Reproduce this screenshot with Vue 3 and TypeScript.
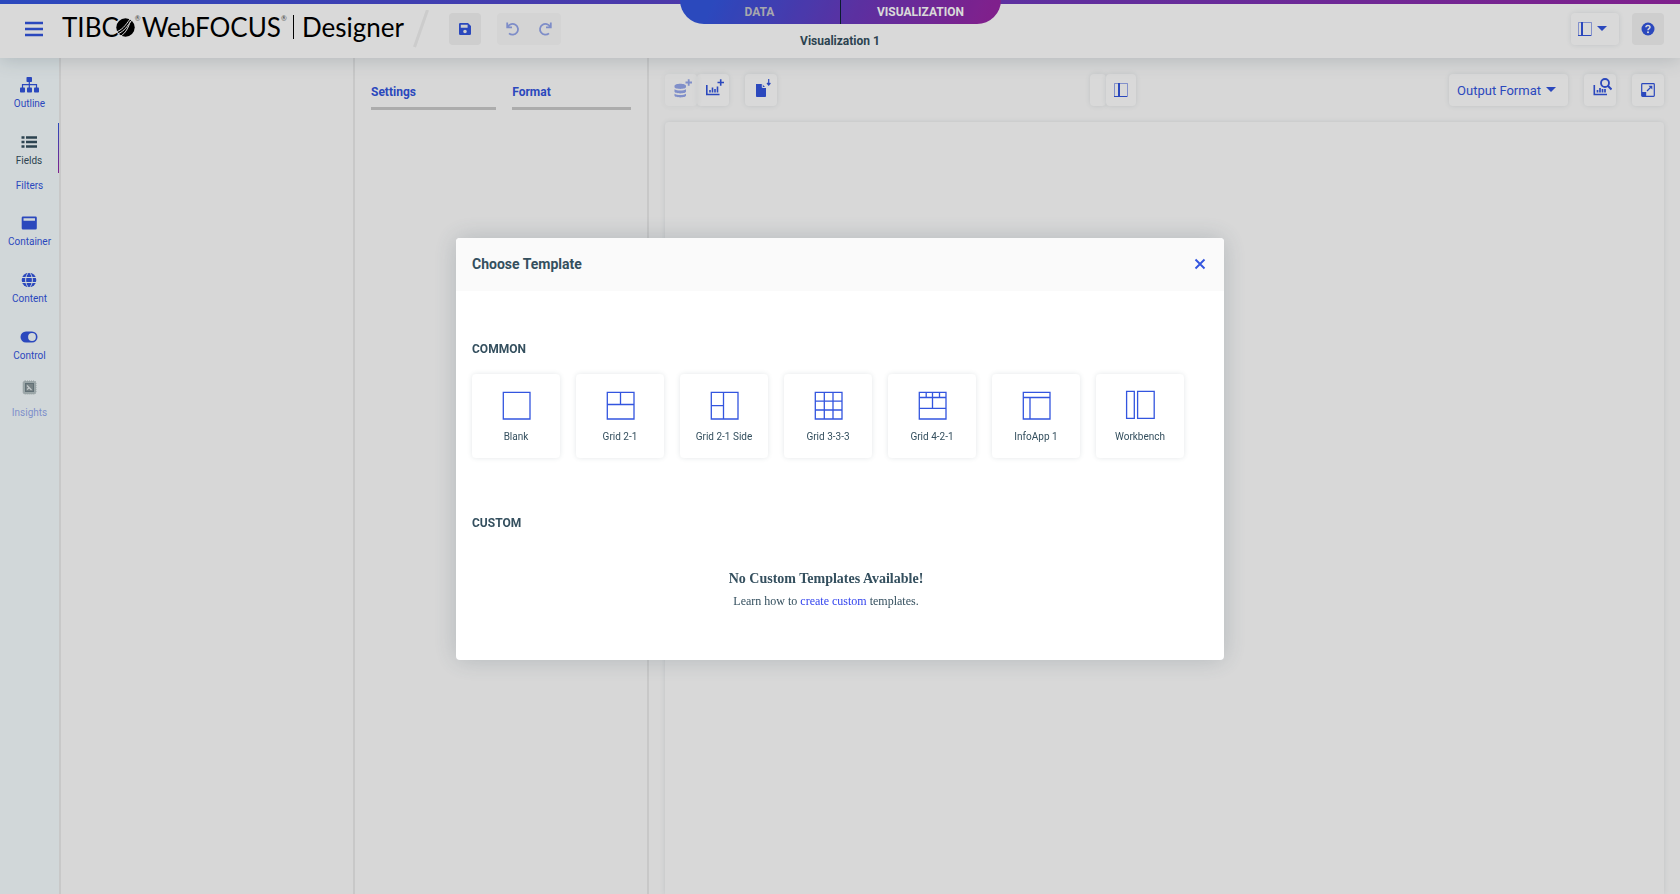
<script setup lang="ts">
import { ref } from 'vue'

interface Template {
  name: string
  path: string
}

const frame = 'M2.3 2.3H29V29H2.3Z'

const templates: Template[] = [
  { name: 'Blank', path: frame },
  { name: 'Grid 2-1', path: `${frame}M2.3 14.5H29M15.5 2.3V14.5` },
  { name: 'Grid 2-1 Side', path: `${frame}M14.5 2.3V29M2.3 15.6H14.5` },
  { name: 'Grid 3-3-3', path: `${frame}M11.3 2.3V29M20 2.3V29M2.3 11.2H29M2.3 20H29` },
  { name: 'Grid 4-2-1', path: `${frame}M2.3 7.5H29M2.3 18.4H29M15.5 2.3V18.4M9.2 2.3V7.5M22.5 2.3V7.5` },
  { name: 'InfoApp 1', path: `${frame}M2.3 7.5H29M9 7.5V29` },
  { name: 'Workbench', path: 'M1.6 1.3H9.3V28.4H1.6ZM12.6 1.3H29.2V28.4H12.6Z' },
]

interface NavItem {
  id: string
  label: string
}

const navItems: NavItem[] = [
  { id: 'outline', label: 'Outline' },
  { id: 'fields', label: 'Fields' },
  { id: 'filters', label: 'Filters' },
  { id: 'container', label: 'Container' },
  { id: 'content', label: 'Content' },
  { id: 'control', label: 'Control' },
  { id: 'insights', label: 'Insights' },
]

const activeNav = ref('fields')
const dialogOpen = ref(true)
</script>

<template>
  <div class="app">
    <header class="header">
      <div class="header-left">
        <button class="menu" aria-label="Menu">
          <svg width="18" height="16" viewBox="0 0 18 16"><path d="M0 2H18M0 8H18M0 14H18" stroke="currentColor" stroke-width="2.6" /></svg>
        </button>
        <div class="brand">
          <span>TIBC</span>
          <svg class="ball" width="19" height="19" viewBox="0 0 19 19">
            <circle cx="9.5" cy="9.5" r="9.2" fill="#000" />
            <path d="M0 14C6 12 9 8 14 1M1.500 16C9 13 11 8 16 2M4 18.500C10 15 12 10 14.500 3" fill="none" stroke="#fff" stroke-width="1" />
          </svg>
          <sup>®</sup>
          <span>WebFOCUS</span>
          <sup>®</sup>
          <i class="bar"></i>
          <span>Designer</span>
        </div>
        <svg class="slash" width="16" height="38" viewBox="0 0 16 38"><path d="M14.500 0L1.500 37" stroke="#f0f0f0" stroke-width="3" /></svg>
        <button class="tool grey" aria-label="Save">
          <svg width="12" height="12" viewBox="0 0 12 12"><path fill="currentColor" fill-rule="evenodd" d="M1.300 0H9L12 3V10.700A1.300 1.300 0 0 1 10.700 12H1.300A1.300 1.300 0 0 1 0 10.700V1.300A1.300 1.300 0 0 1 1.300 0ZM1.800 1.800V4.800H8.600V1.800ZM6 6.700A1.800 1.800 0 1 0 6 10.300A1.800 1.800 0 1 0 6 6.700Z" /></svg>
        </button>
        <div class="history">
          <button class="faded" aria-label="Undo" disabled>
            <svg width="14" height="14" viewBox="0 0 14 14"><path d="M1.200 .5V5.300H6M1.800 4.800A5.400 5.400 0 1 1 3 11.300" fill="none" stroke="currentColor" stroke-width="1.800" /></svg>
          </button>
          <button class="faded" aria-label="Redo" disabled>
            <svg width="14" height="14" viewBox="0 0 14 14"><path d="M12.800 .5V5.300H8M12.200 4.800A5.400 5.400 0 1 0 11 11.300" fill="none" stroke="currentColor" stroke-width="1.800" /></svg>
          </button>
        </div>
      </div>
      <div class="header-center">
        <nav class="modes">
          <button class="mode">DATA</button>
          <button class="mode current">VISUALIZATION</button>
        </nav>
        <h1>Visualization 1</h1>
      </div>
      <div class="header-right">
        <button class="tool wide" aria-label="Panel layout">
          <svg width="14" height="14" viewBox="0 0 14 14"><path d="M.5 .5H13.500V13.500H.5Z" fill="none" stroke="currentColor" stroke-opacity=".5" /><path d="M0 13.500H13" stroke="currentColor" /><path d="M3 0H5V14H3Z" fill="currentColor" /></svg>
          <svg width="10" height="8" viewBox="0 0 10 8"><path d="M0 1H10L5 6Z" fill="currentColor" /></svg>
        </button>
        <button class="tool grey" aria-label="Help">
          <svg width="14" height="14" viewBox="0 0 14 14"><circle cx="7" cy="7" r="6.500" fill="currentColor" /><path d="M4.900 5.300C5 3 9 3 9 5.200C9 6.600 7 6.600 7 8.300" fill="none" stroke="#fff" stroke-width="1.500" /><circle cx="7" cy="10.300" r="1" fill="#fff" /></svg>
        </button>
      </div>
    </header>

    <div class="workspace">
      <nav class="sidebar">
        <button
          v-for="item in navItems"
          :key="item.id"
          :class="['nav', item.id, { active: item.id === activeNav }]"
          :disabled="item.id === 'insights'"
          @click="activeNav = item.id"
        >
          <svg v-if="item.id !== 'filters'" width="20" height="18" viewBox="0 0 20 18">
            <g v-if="item.id === 'outline'" fill="currentColor">
              <rect x="7.500" y="1" width="5.500" height="5" rx=".8" /><rect x="1" y="11.500" width="5" height="5" rx=".8" /><rect x="8" y="11.500" width="5" height="5" rx=".8" /><rect x="15" y="11.500" width="5" height="5" rx=".8" />
              <path d="M10.300 5V12M3.500 12V8.700H17.500V12" fill="none" stroke="currentColor" stroke-width="1.200" />
            </g>
            <path v-else-if="item.id === 'fields'" d="M2.500 4.500H5.500M7 4.500H18M2.500 9H5.500M7 9H18M2.500 13.500H5.500M7 13.500H18" stroke="currentColor" stroke-width="2.400" />
            <path v-else-if="item.id === 'container'" d="M4 2.500H16.500A1.300 1.300 0 0 1 17.800 3.800V14.200A1.300 1.300 0 0 1 16.500 15.500H4A1.300 1.300 0 0 1 2.700 14.200V3.800A1.300 1.300 0 0 1 4 2.500ZM4.500 4.200V6.800H16V4.200Z" fill="currentColor" fill-rule="evenodd" />
            <g v-else-if="item.id === 'content'" fill="none">
              <circle cx="10" cy="9" r="7.300" fill="currentColor" />
              <path d="M2 6.500H18M2 11.500H18M10 1C5.500 5 5.500 13 10 17M10 1C14.500 5 14.500 13 10 17" stroke="#f6fdff" stroke-width="1" />
            </g>
            <g v-else-if="item.id === 'control'"><rect x="1.500" y="3.500" width="17" height="11" rx="5.500" fill="currentColor" /><circle cx="13" cy="9" r="3.900" fill="#f6fdff" /></g>
            <g v-else><rect x="4" y="3" width="13" height="13" rx="2" fill="#9eacaf" fill-opacity=".7" stroke="#aab7ba" stroke-dasharray="1 1" /><rect x="6.500" y="5.500" width="8" height="8" fill="#8c999d" stroke="#73848b" /><path d="M8 7.500L12.500 12M8 11.500L10 10" fill="none" stroke="#e8eff1" stroke-width="1.200" /></g>
          </svg>
          <span>{{ item.label }}</span>
        </button>
      </nav>

      <section class="panel" aria-label="Fields"></section>

      <section class="panel">
        <div class="tabs">
          <button>Settings</button>
          <button>Format</button>
        </div>
      </section>

      <main class="stage">
        <div class="toolbar">
          <div class="cluster">
            <div class="pair">
              <button class="tool faded" aria-label="Add data" disabled>
                <svg width="24" height="24" viewBox="0 0 24 24"><g fill="currentColor"><path d="M5.500 8C5.500 5 17 5 17 8V9C17 11.500 5.500 11.500 5.500 9Z" /><path d="M5.500 11.300C7.500 13 15 13 17 11.300V13.500C17 16 5.500 16 5.500 13.500Z" /><path d="M5.500 15.700C7.500 17.500 15 17.500 17 15.700V17.500C17 20 5.500 20 5.500 17.500Z" /></g><path d="M16.500 4.500H23M19.700 1.300V7.700" stroke="currentColor" stroke-width="1.800" /></svg>
              </button>
              <button class="tool" aria-label="Add chart">
                <svg width="24" height="24" viewBox="0 0 24 24"><path d="M5.800 7V16.500H18.500" fill="none" stroke="currentColor" stroke-width="1.600" /><path d="M9 14.500V12M11.500 14.500V9.500M14 14.500V11M16.500 14.500V8.500M16.500 4.500H23M19.700 1.300V7.700" stroke="currentColor" stroke-width="1.600" /></svg>
              </button>
            </div>
            <button class="tool" aria-label="Load page">
              <svg width="24" height="24" viewBox="0 0 24 24"><path d="M7 6H13L17 10V18.300A.8 .8 0 0 1 16.200 19H7.800A.8 .8 0 0 1 7 18.300Z" fill="currentColor" /><path d="M13.300 5.500V9.500H17.500" fill="none" stroke="#fff" /><path d="M19.700 1V6.500M18 5L19.700 7L21.400 5" fill="none" stroke="currentColor" stroke-width="1.200" /></svg>
            </button>
          </div>

          <div class="pair">
            <button class="tool narrow" aria-label="Collapse"></button>
            <button class="tool medium" aria-label="Show panels">
              <svg width="14" height="14" viewBox="0 0 14 14"><path d="M.5 .5H13.500V13.500H.5Z" fill="none" stroke="currentColor" stroke-opacity=".5" /><path d="M0 13.500H13" stroke="currentColor" /><path d="M4 0H6V14H4Z" fill="currentColor" /></svg>
            </button>
          </div>

          <div class="cluster">
            <button class="tool output">
              <span>Output Format</span>
              <svg width="10" height="8" viewBox="0 0 10 8"><path d="M0 1H10L5 6Z" fill="currentColor" /></svg>
            </button>
            <button class="tool" aria-label="Inspect chart">
              <svg width="24" height="24" viewBox="0 0 24 24"><path d="M6.300 7V16.500H19" fill="none" stroke="currentColor" stroke-width="1.600" /><path d="M9.500 14.500V12M12 14.500V10M14.500 14.500V11M17 14.500V11" stroke="currentColor" stroke-width="1.700" /><circle cx="17" cy="5" r="4" fill="#fff" stroke="currentColor" stroke-width="1.800" /><path d="M19.800 7.800L23.500 11.500" stroke="currentColor" stroke-width="2" /></svg>
            </button>
            <button class="tool" aria-label="Full screen">
              <svg width="14" height="14" viewBox="0 0 14 14"><rect x=".7" y=".7" width="12.600" height="12.600" rx=".8" fill="none" stroke="currentColor" stroke-width="1.200" /><path d="M1 9H5.200V13H1Z" fill="currentColor" /><path d="M6 8L10.500 3.500" stroke="currentColor" stroke-width="1.300" /><path d="M7.500 2.700H11.300V6.500Z" fill="currentColor" /></svg>
            </button>
          </div>
        </div>
        <div class="canvas"></div>
      </main>
    </div>

    <div v-if="dialogOpen" class="overlay">
      <div class="dialog" role="dialog" aria-modal="true" aria-labelledby="dialog-title">
        <div class="dialog-head">
          <h2 id="dialog-title">Choose Template</h2>
          <button aria-label="Close" @click="dialogOpen = false">
            <svg width="12" height="12" viewBox="0 0 12 12"><path d="M1.500 1.500L10.500 10.500M10.500 1.500L1.500 10.500" stroke="currentColor" stroke-width="1.900" /></svg>
          </button>
        </div>
        <div class="dialog-body">
          <h3>COMMON</h3>
          <div class="cards">
            <button v-for="t in templates" :key="t.name" class="card">
              <svg width="30" height="30" viewBox="0 0 30 30"><path :d="t.path" fill="none" stroke="currentColor" stroke-width="1.300" /></svg>
              <span>{{ t.name }}</span>
            </button>
          </div>
          <h3 class="second">CUSTOM</h3>
          <div class="empty">
            <strong>No Custom Templates Available!</strong>
            <p>Learn how to <a href="#">create custom</a> templates.</p>
          </div>
        </div>
      </div>
    </div>
  </div>
</template>

<style>
body {
  margin: 0;
}
</style>

<style scoped>
.app {
  --blue: #3355df;
  --ink: #344f5e;
  display: flex;
  flex-direction: column;
  min-height: 100vh;
  background: #fdfdfd;
  color: var(--ink);
  font-family: Roboto, sans-serif;
  font-size: 12px;
}

.app *,
.app {
  box-sizing: border-box;
}

button {
  display: flex;
  align-items: center;
  justify-content: center;
  padding: 0;
  border: 0;
  background: none;
  color: var(--blue);
  font: inherit;
  cursor: pointer;
}

svg {
  display: block;
  flex: none;
}

h1,
h2,
h3,
p {
  margin: 0;
}

.header {
  position: relative;
  display: grid;
  grid-template-columns: minmax(0, 1fr) auto minmax(0, 1fr);
  height: 58px;
  background: linear-gradient(90deg, #3356df, #9626a5) top / 100% 4px no-repeat #fff;
  box-shadow: 0 2px 18px rgba(45, 70, 84, 0.2);
}

.header-left,
.header-right {
  display: flex;
  align-items: center;
}

.header-left {
  padding-left: 25px;
}

.header-right {
  justify-content: flex-end;
  gap: 13px;
  padding-right: 16px;
}

.brand {
  display: flex;
  align-items: center;
  width: 342px;
  margin-left: 19px;
  padding-bottom: 4px;
  color: #000;
  font-family: Lato, sans-serif;
  font-size: 26px;
  line-height: 30px;
  white-space: nowrap;
}

.ball {
  margin-left: -3px;
}

.brand sup {
  align-self: flex-start;
  margin-right: 1px;
  color: #555;
  font-size: 7px;
  line-height: 12px;
}

.bar {
  width: 2px;
  height: 24px;
  margin: 0 8px 0 5px;
  background: #000;
}

.slash {
  margin: 0 20px 0 9px;
}

.history {
  display: flex;
  margin-left: 16px;
  border-radius: 4px;
  background: #fafafa;
}

.history button {
  width: 32px;
  height: 32px;
}

.faded {
  opacity: 0.5;
}

.tool {
  width: 32px;
  height: 32px;
  border-radius: 4px;
  background: #fff;
  box-shadow: 0 0 5px rgba(45, 70, 84, 0.13);
}

.tool.grey {
  background: #f3f3f3;
  box-shadow: none;
}

.tool.wide {
  gap: 5px;
  width: 48px;
  padding-right: 5px;
}

.tool.narrow {
  width: 16px;
}

.tool.medium {
  width: 30px;
}

.tool.output {
  gap: 5px;
  width: auto;
  padding: 0 12px 0 8px;
  font-size: 13px;
}

.header-center {
  display: flex;
  flex-direction: column;
  align-items: center;
}

.modes {
  display: flex;
  width: 321px;
  height: 24px;
  border-radius: 0 0 24px 24px;
  background: linear-gradient(115deg, #3356df 10%, #6c39bd 55%, #9626a5 95%);
  overflow: hidden;
}

.mode {
  flex: 1;
  color: #c6c6cc;
  font-weight: 700;
}

.mode.current {
  border-left: 1px solid #0d2238;
  color: #fff;
}

h1 {
  margin-top: 9px;
  font-size: 12px;
  line-height: 16px;
}

.workspace {
  display: flex;
  flex: 1;
}

.sidebar {
  display: flex;
  flex-direction: column;
  gap: 7px;
  width: 61px;
  padding-top: 8px;
  border-right: 2px solid #ebebeb;
  background: #f6fdff;
}

.nav {
  flex-direction: column;
  justify-content: flex-start;
  gap: 4px;
  height: 50px;
  padding-top: 10px;
  font-size: 10px;
  line-height: 12px;
}

.nav svg {
  margin-right: 1px;
}

.nav.active {
  border-right: 1px solid;
  border-image: linear-gradient(#3356df, #9626a5) 1;
  color: var(--ink);
}

.nav.filters {
  height: 17px;
  padding-top: 0;
}

.nav.insights {
  gap: 11px;
  padding-top: 3px;
}

.nav.insights span {
  opacity: 0.5;
}

.panel {
  width: 294px;
  padding: 26px 16px 0;
  border-right: 2px solid #ebebeb;
}

.tabs {
  display: flex;
  gap: 16px;
}

.tabs button {
  flex: 1 1 auto;
  justify-content: flex-start;
  padding-bottom: 7px;
  border-bottom: 3px solid #cbcbcb;
  font-weight: 700;
  line-height: 16px;
}

.stage {
  display: flex;
  flex: 1;
  flex-direction: column;
  gap: 16px;
  padding: 16px 16px 0;
}

.toolbar {
  display: flex;
  justify-content: space-between;
}

.cluster {
  display: flex;
  gap: 16px;
}

.pair {
  display: flex;
}

.canvas {
  flex: 1;
  border-radius: 4px 4px 0 0;
  background: #fefefe;
  box-shadow: 0 0 5px rgba(45, 70, 84, 0.13);
}

.overlay {
  position: fixed;
  inset: 0;
  display: flex;
  align-items: center;
  justify-content: center;
  padding-top: 4px;
  background: rgba(0, 0, 0, 0.15);
}

.dialog {
  width: 768px;
  border-radius: 4px;
  background: #fff;
  box-shadow: 0 0 24px rgba(45, 70, 84, 0.22);
  overflow: hidden;
}

.dialog-head {
  display: flex;
  align-items: center;
  justify-content: space-between;
  height: 53px;
  padding: 0 18px 2px 16px;
  background: #fafafa;
}

h2 {
  font-size: 14px;
  line-height: 20px;
}

.dialog-body {
  padding: 48px 16px 48px;
}

h3 {
  font-size: 12px;
  line-height: 20px;
}

.second {
  margin-top: 55px;
}

.cards {
  display: flex;
  gap: 16px;
  margin-top: 15px;
}

.card {
  flex-direction: column;
  justify-content: flex-start;
  gap: 11px;
  width: 88px;
  height: 84px;
  padding-top: 16px;
  border-radius: 4px;
  background: #fff;
  box-shadow: 0 0 5px rgba(45, 70, 84, 0.13);
  font-size: 10px;
  line-height: 12px;
}

.card span {
  color: var(--ink);
}

.empty {
  margin: 35px 28px 0 0;
  font-family: "Liberation Serif", serif;
  line-height: 22px;
  text-align: center;
}

.empty strong {
  display: block;
  font-size: 14px;
}

.empty a {
  color: #3344ee;
  text-decoration: none;
}
</style>
